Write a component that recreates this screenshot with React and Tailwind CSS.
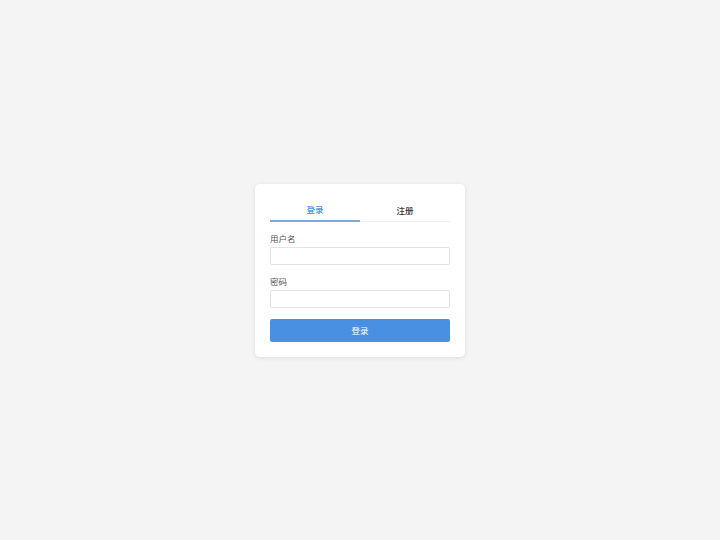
import React, { useState } from "react";

const font = { fontFamily: '"Noto Sans CJK SC", "Noto Sans", sans-serif' };

const Field = ({ label, type = "text", className = "" }) => (
  <div className={className}>
    <label className="block text-[8.5px] leading-[12px] text-[#555] mb-[3px]">{label}</label>
    <input
      type={type}
      className="block w-full h-[18px] bg-white border border-[#e3e3e3] rounded-[2px] px-1 text-[8.5px] outline-none"
    />
  </div>
);

const App = () => {
  const [tab, setTab] = useState("login");

  return (
    <div className="min-h-screen bg-[#f4f4f4] flex items-center justify-center" style={font}>
      <div className="w-[210px] p-[15px] bg-white rounded-[5px] shadow-[0_1px_4px_rgba(0,0,0,0.1)]">
        {/* tabs */}
        <div className="flex">
          <button
            onClick={() => setTab("login")}
            className={
              tab === "login"
                ? "flex-1 h-[23px] pt-[1px] flex items-center justify-center text-[8.5px] font-medium text-[#4a90e2] border-b-2 border-[#7fa8e0]"
                : "flex-1 h-[23px] pt-[2px] flex items-center justify-center text-[8.5px] font-medium text-[#333] border-b border-[#eeeeee]"
            }
          >
            登录
          </button>
          <button
            onClick={() => setTab("register")}
            className={
              tab === "register"
                ? "flex-1 h-[23px] pt-[1px] flex items-center justify-center text-[8.5px] font-medium text-[#4a90e2] border-b-2 border-[#7fa8e0]"
                : "flex-1 h-[23px] pt-[2px] flex items-center justify-center text-[8.5px] font-medium text-[#333] border-b border-[#eeeeee]"
            }
          >
            注册
          </button>
        </div>

        {/* form */}
        <Field label="用户名" className="mt-[10px]" />
        <Field label="密码" type="password" className="mt-[10px]" />
        <button className="mt-[11px] w-full h-[23px] bg-[#4a90e2] text-white text-[8.5px] rounded-[2px]">
          登录
        </button>
      </div>
    </div>
  );
};

export default App;
